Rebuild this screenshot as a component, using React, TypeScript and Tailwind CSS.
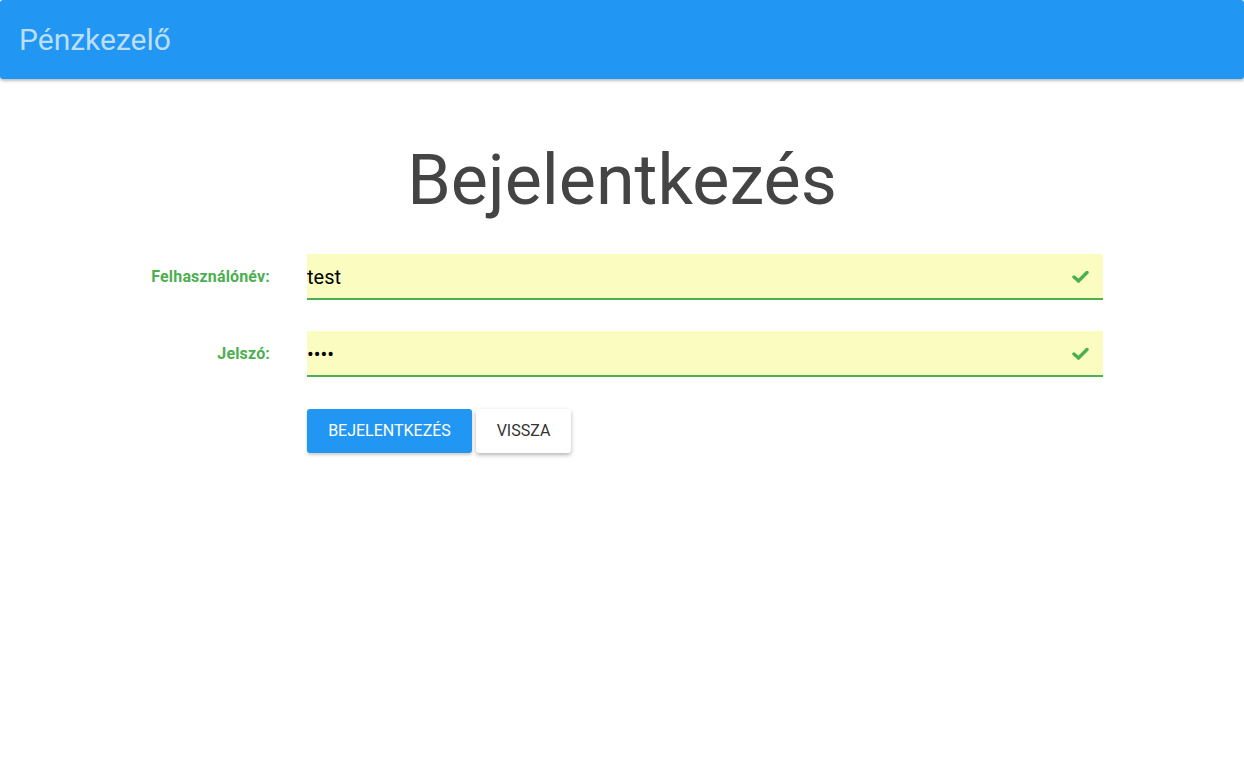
function CheckMark() {
  return (
    <svg width="17" height="13" viewBox="0 0 17 13" className="mr-[14px] shrink-0">
      <polyline
        points="2,7 6.5,11 15,2.5"
        fill="none"
        stroke="#4caf50"
        strokeWidth="3.4"
        strokeLinecap="round"
        strokeLinejoin="miter"
      />
    </svg>
  );
}

function Field({ label, value, type }: { label: string; value: string; type: string }) {
  return (
    <div className="flex items-center">
      <label className="w-[270px] shrink-0 text-right text-[16px] font-bold tracking-[0.01em] text-[#4caf50]">
        {label}
      </label>
      <div className="ml-[37px] flex h-[46px] w-[796px] items-center border-b-2 border-[#4caf50] bg-[#fafdbf]">
        <input
          readOnly
          type={type}
          value={value}
          className="h-full flex-1 bg-transparent pt-[2px] text-[20px] text-black outline-none"
        />
        <CheckMark />
      </div>
    </div>
  );
}

export default function App() {
  return (
    <div className="min-h-screen bg-white font-['Roboto',sans-serif]">
      {/* Navbar */}
      <nav className="flex h-[79px] items-center rounded-[3px] bg-[#2196f3] pl-[19px] shadow-[0_2px_3px_rgba(0,0,0,0.25)]">
        <span className="text-[30px] text-[#bbdefb]">Pénzkezelő</span>
      </nav>

      {/* Login form */}
      <h1 className="mt-[52px] text-center text-[70px] leading-[98px] text-[#444]">Bejelentkezés</h1>

      <div className="mt-[25px] flex flex-col gap-[31px]">
        <Field label="Felhasználónév:" value="test" type="text" />
        <Field label="Jelszó:" value="test" type="password" />
      </div>

      <div className="ml-[307px] mt-[32px] flex gap-[4px]">
        <button className="h-[44px] w-[165px] rounded-[3px] bg-[#2196f3] text-[16px] text-white shadow-[0_2px_3px_rgba(0,0,0,0.2)]">
          BEJELENTKEZÉS
        </button>
        <button className="h-[44px] w-[95px] rounded-[3px] bg-white text-[16px] text-[#333] shadow-[0_2px_4px_rgba(0,0,0,0.3)]">
          VISSZA
        </button>
      </div>
    </div>
  );
}
